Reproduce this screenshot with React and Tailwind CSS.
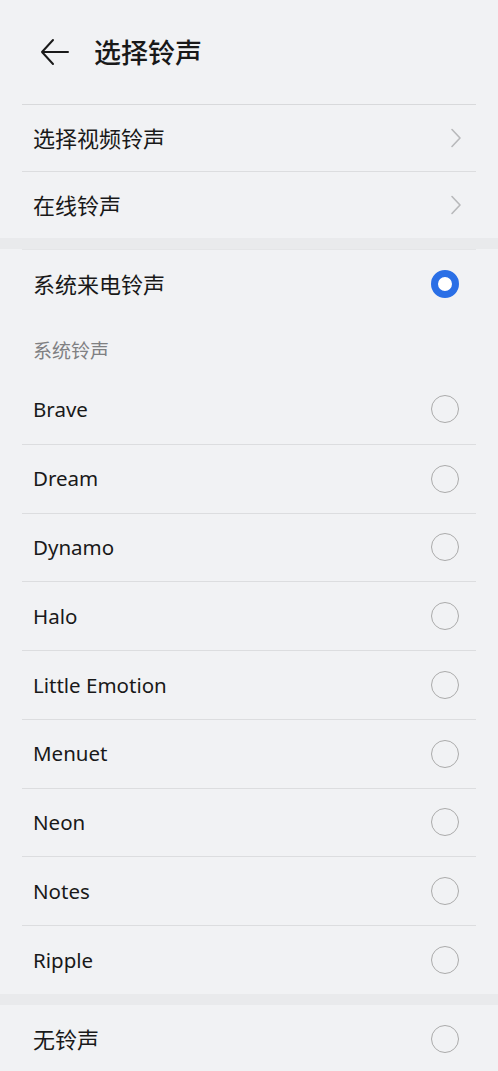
import React, { useState } from 'react';

const FONT = "font-['Noto_Sans','Noto_Sans_CJK_SC',sans-serif]";

const ringtones = ['Brave', 'Dream', 'Dynamo', 'Halo', 'Little Emotion', 'Menuet', 'Neon', 'Notes', 'Ripple'];

const Chevron = () => (
    <svg width="12" height="20" viewBox="0 0 12 20" fill="none">
        <path d="M2 1.5 L10 10 L2 18.5" stroke="#b8b9bb" strokeWidth="1.6" strokeLinecap="round" strokeLinejoin="round" />
    </svg>
);

const Radio = ({ checked }) =>
    checked ? (
        <span className="block w-[28px] h-[28px] rounded-full border-[7px] border-[#2a6fe6] bg-white"></span>
    ) : (
        <span className="block w-[28px] h-[28px] rounded-full border-[1.5px] border-[#ababab]"></span>
    );

const App = () => {
    const [selected, setSelected] = useState('system');

    return (
        <div className={`min-h-screen w-full bg-[#f1f2f4] text-[#191919] ${FONT}`}>
            {/* Header */}
            <div className="h-[104px] flex items-center pl-[40px]">
                <svg width="30" height="28" viewBox="0 0 30 28" fill="none">
                    <path d="M28 14 H2 M13 2 L2 14 L13 26" stroke="#1a1a1a" strokeWidth="2" strokeLinecap="round" strokeLinejoin="round" />
                </svg>
                <h1 className="ml-[24px] text-[27px] font-medium leading-none">选择铃声</h1>
            </div>

            {/* Links */}
            <div className="mx-[22px] border-t border-[#d8d9db]">
                <div className="h-[67px] flex items-center justify-between pl-[11px] pr-[14px] border-b border-[#dcdddf]">
                    <span className="text-[22px] leading-none">选择视频铃声</span>
                    <Chevron />
                </div>
                <div className="h-[66px] flex items-center justify-between pl-[11px] pr-[14px]">
                    <span className="text-[22px] leading-none">在线铃声</span>
                    <Chevron />
                </div>
            </div>

            <div className="h-[11px] bg-[#e9eaec]"></div>

            <div className="mx-[22px] border-t border-[#e4e5e7]">
                <div
                    className="h-[67px] flex items-center justify-between pl-[11px] pr-[17px]"
                    onClick={() => setSelected('system')}
                >
                    <span className="text-[22px] leading-none">系统来电铃声</span>
                    <Radio checked={selected === 'system'} />
                </div>

                <div className="h-[58px] flex items-end pl-[11px] pb-[14px]">
                    <span className="text-[19px] leading-[20px] text-[#7f8082]">系统铃声</span>
                </div>

                {ringtones.map((name, i) => (
                    <div
                        key={name}
                        onClick={() => setSelected(name)}
                        className={`h-[68.75px] flex items-center justify-between pl-[11px] pr-[17px] ${i > 0 ? 'border-t border-[#dcdddf]' : ''}`}
                    >
                        <span className="text-[20.5px] leading-none">{name}</span>
                        <Radio checked={selected === name} />
                    </div>
                ))}
            </div>

            <div className="h-[11px] bg-[#e9eaec]"></div>

            <div className="mx-[22px]">
                <div
                    className="h-[68px] flex items-center justify-between pl-[11px] pr-[17px]"
                    onClick={() => setSelected('none')}
                >
                    <span className="text-[22px] leading-none">无铃声</span>
                    <Radio checked={selected === 'none'} />
                </div>
            </div>
        </div>
    );
};

export default App;
